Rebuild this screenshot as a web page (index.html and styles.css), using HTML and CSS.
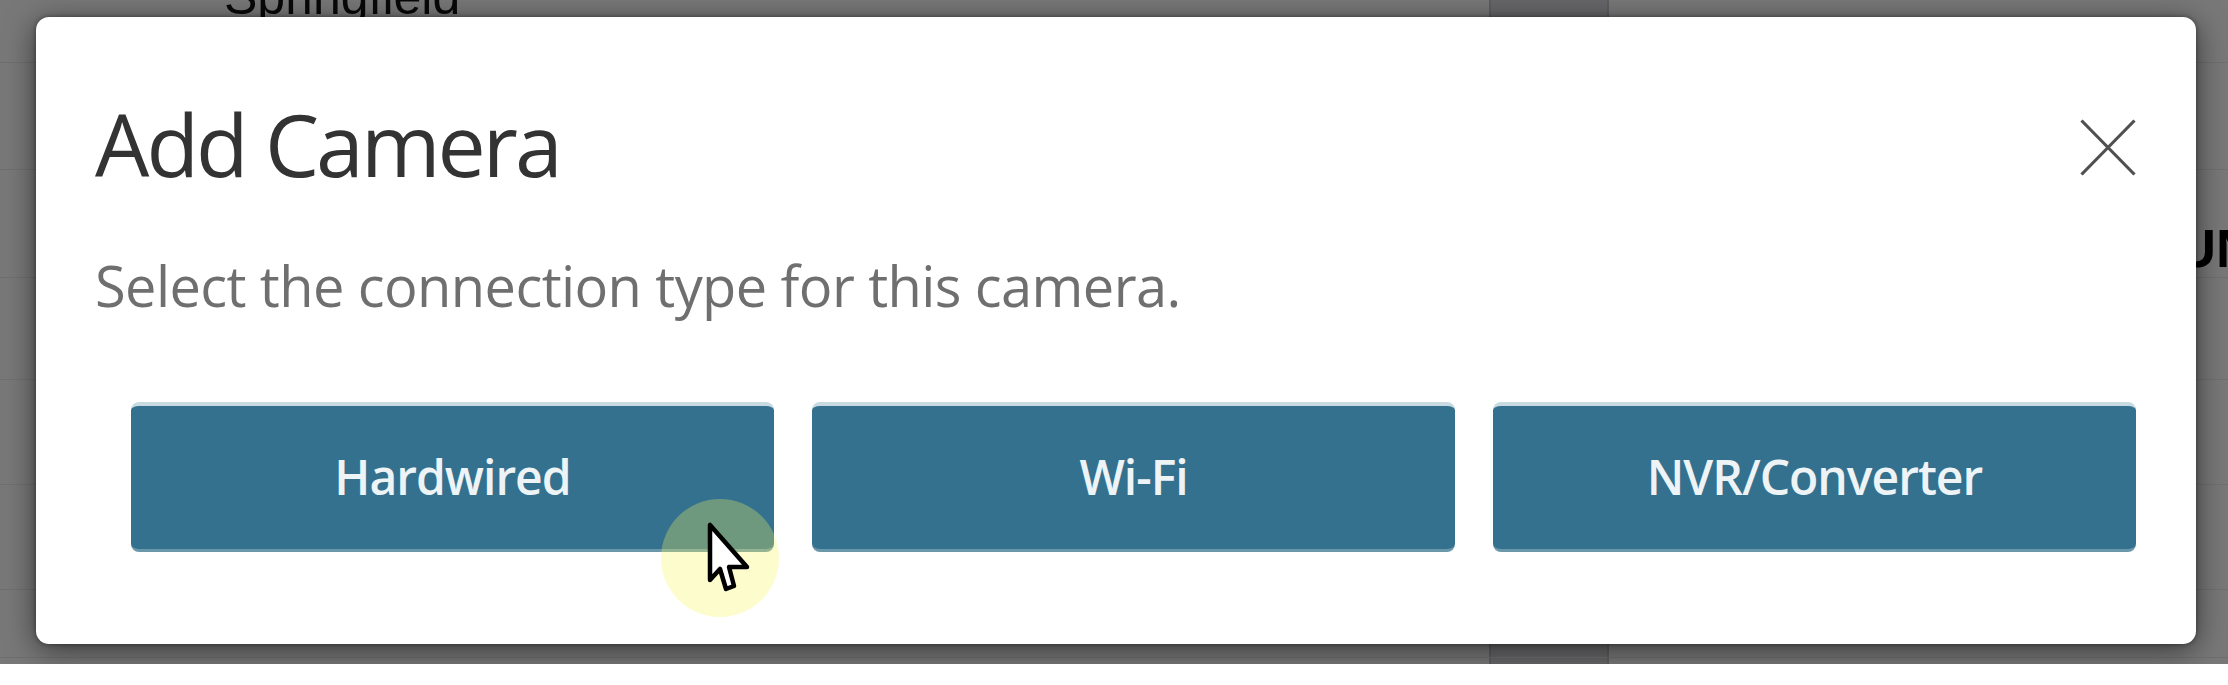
FILE: index.html
```html
<!DOCTYPE html>
<html lang="en">
<head>
<meta charset="utf-8">
<title>Add Camera</title>
<link rel="stylesheet" href="styles.css">
</head>
<body>
<div class="page">
  <div class="sheet">
    <div class="row r1"><div class="c c1"><span class="city">Springfield</span></div><div class="c c2"></div><div class="c c3"></div></div>
    <div class="row r2"><div class="c c1"></div><div class="c c2"></div><div class="c c3"></div></div>
    <div class="row r3"><div class="c c1"></div><div class="c c2"></div><div class="c c3"><span class="unit">UNIT</span></div></div>
    <div class="row r4"><div class="c c1"></div><div class="c c2"></div><div class="c c3"></div></div>
    <div class="row r5"><div class="c c1"></div><div class="c c2"></div><div class="c c3"></div></div>
    <div class="row r6"><div class="c c1"></div><div class="c c2"></div><div class="c c3"></div></div>
    <div class="row r7"><div class="c c1"></div><div class="c c2"></div><div class="c c3"></div></div>
    <div class="row r8"><div class="c c1"></div><div class="c c2"></div><div class="c c3"></div></div>
  </div>
  <div class="backdrop"></div>
  <div class="dialog" role="dialog" aria-labelledby="dlg-title">
    <div class="head">
      <h1 class="title" id="dlg-title">Add Camera</h1>
      <button class="close" aria-label="Close">
        <svg viewBox="0 0 56 57" width="56" height="57"><path d="M1.5 1.5 L54.5 55.5 M54.5 1.5 L1.5 55.5" stroke="#505050" stroke-width="3.2" fill="none"/></svg>
      </button>
    </div>
    <p class="lead">Select the connection type for this camera.</p>
    <div class="choices">
      <button class="choice">Hardwired</button>
      <button class="choice">Wi-Fi</button>
      <button class="choice">NVR/Converter</button>
    </div>
  </div>
  <div class="ring"></div>
  <svg class="cursor" viewBox="0 0 46 74" width="46" height="74"><polygon points="4,4 4,59 14,48 20,68 28,65 23,46 41,46" fill="#fff" stroke="#000" stroke-width="4.5" stroke-linejoin="round"/></svg>
</div>
</body>
</html>
```
FILE: styles.css
```css
html, body {
  margin: 0;
  background: #ffffff;
}

.page {
  position: relative;
  height: 664px;
  overflow: hidden;
  background: #ffffff;
}

.sheet {
  margin-top: -60px;
}

.row {
  display: flex;
  box-sizing: border-box;
  border-bottom: 1px solid #ececec;
}

.r1 { height: 123px; }
.r2 { height: 107px; }
.r3 { height: 108px; }
.r4 { height: 102px; }
.r5 { height: 105px; }
.r6 { height: 105px; }
.r7 { height: 68px; }
.r8 { height: 80px; }

.c {
  box-sizing: border-box;
}

.c1 {
  flex: none;
  width: 1489px;
}

.c2 {
  flex: none;
  width: 120px;
  background: #dadce0;
  border-left: 2px solid #c3c6ca;
  border-right: 2px solid #c3c6ca;
}

.c3 {
  flex: 1;
  min-width: 0;
  overflow: hidden;
  white-space: nowrap;
}

.city {
  display: block;
  padding: 29px 0 0 224px;
  font: 400 50px/57.5px "Liberation Sans", Arial, sans-serif;
  color: #111;
}

.unit {
  display: block;
  padding: 47px 0 0 568px;
  font: 700 54px/62px "Liberation Sans", Arial, sans-serif;
  color: #000;
}

.backdrop {
  position: absolute;
  inset: 0;
  background: rgba(0, 0, 0, 0.53);
}

.dialog {
  position: absolute;
  left: 36px;
  top: 17px;
  width: 2160px;
  box-sizing: border-box;
  padding: 75px 60px 92px 59px;
  background: #ffffff;
  border-radius: 13px;
  box-shadow: 0 6px 30px rgba(0, 0, 0, 0.55), 0 0 5px rgba(0, 0, 0, 0.4);
}

.head {
  display: flex;
  justify-content: space-between;
  align-items: flex-start;
}

.title {
  margin: 0;
  font: 400 86px/103px "Open Sans", "Noto Sans", sans-serif;
  letter-spacing: -3px;
  color: #333333;
}

.close {
  margin-top: 27px;
  width: 56px;
  height: 57px;
  padding: 0;
  border: 0;
  background: none;
  display: block;
}

.close svg {
  display: block;
}

.lead {
  margin: 57px 0 0;
  font: 400 56px/67px "Open Sans", "Noto Sans", sans-serif;
  letter-spacing: -0.6px;
  color: #6f6f6f;
}

.choices {
  display: grid;
  grid-template-columns: repeat(3, 1fr);
  gap: 38px;
  margin-top: 83px;
  padding-left: 36px;
}

.choice {
  height: 150px;
  box-sizing: border-box;
  background: #33718f;
  color: #eef3f5;
  border: 0;
  border-top: 4px solid #c9dbe2;
  border-bottom: 3px solid #6a98aa;
  border-radius: 8px;
  font: 600 48px "Open Sans", "Noto Sans", sans-serif;
  letter-spacing: -1px;
  padding: 0 0 2px;
}

.ring {
  position: absolute;
  left: 661px;
  top: 499px;
  width: 118px;
  height: 118px;
  border-radius: 50%;
  background: rgba(248, 245, 91, 0.3);
}

.cursor {
  position: absolute;
  left: 706px;
  top: 521px;
}
```
